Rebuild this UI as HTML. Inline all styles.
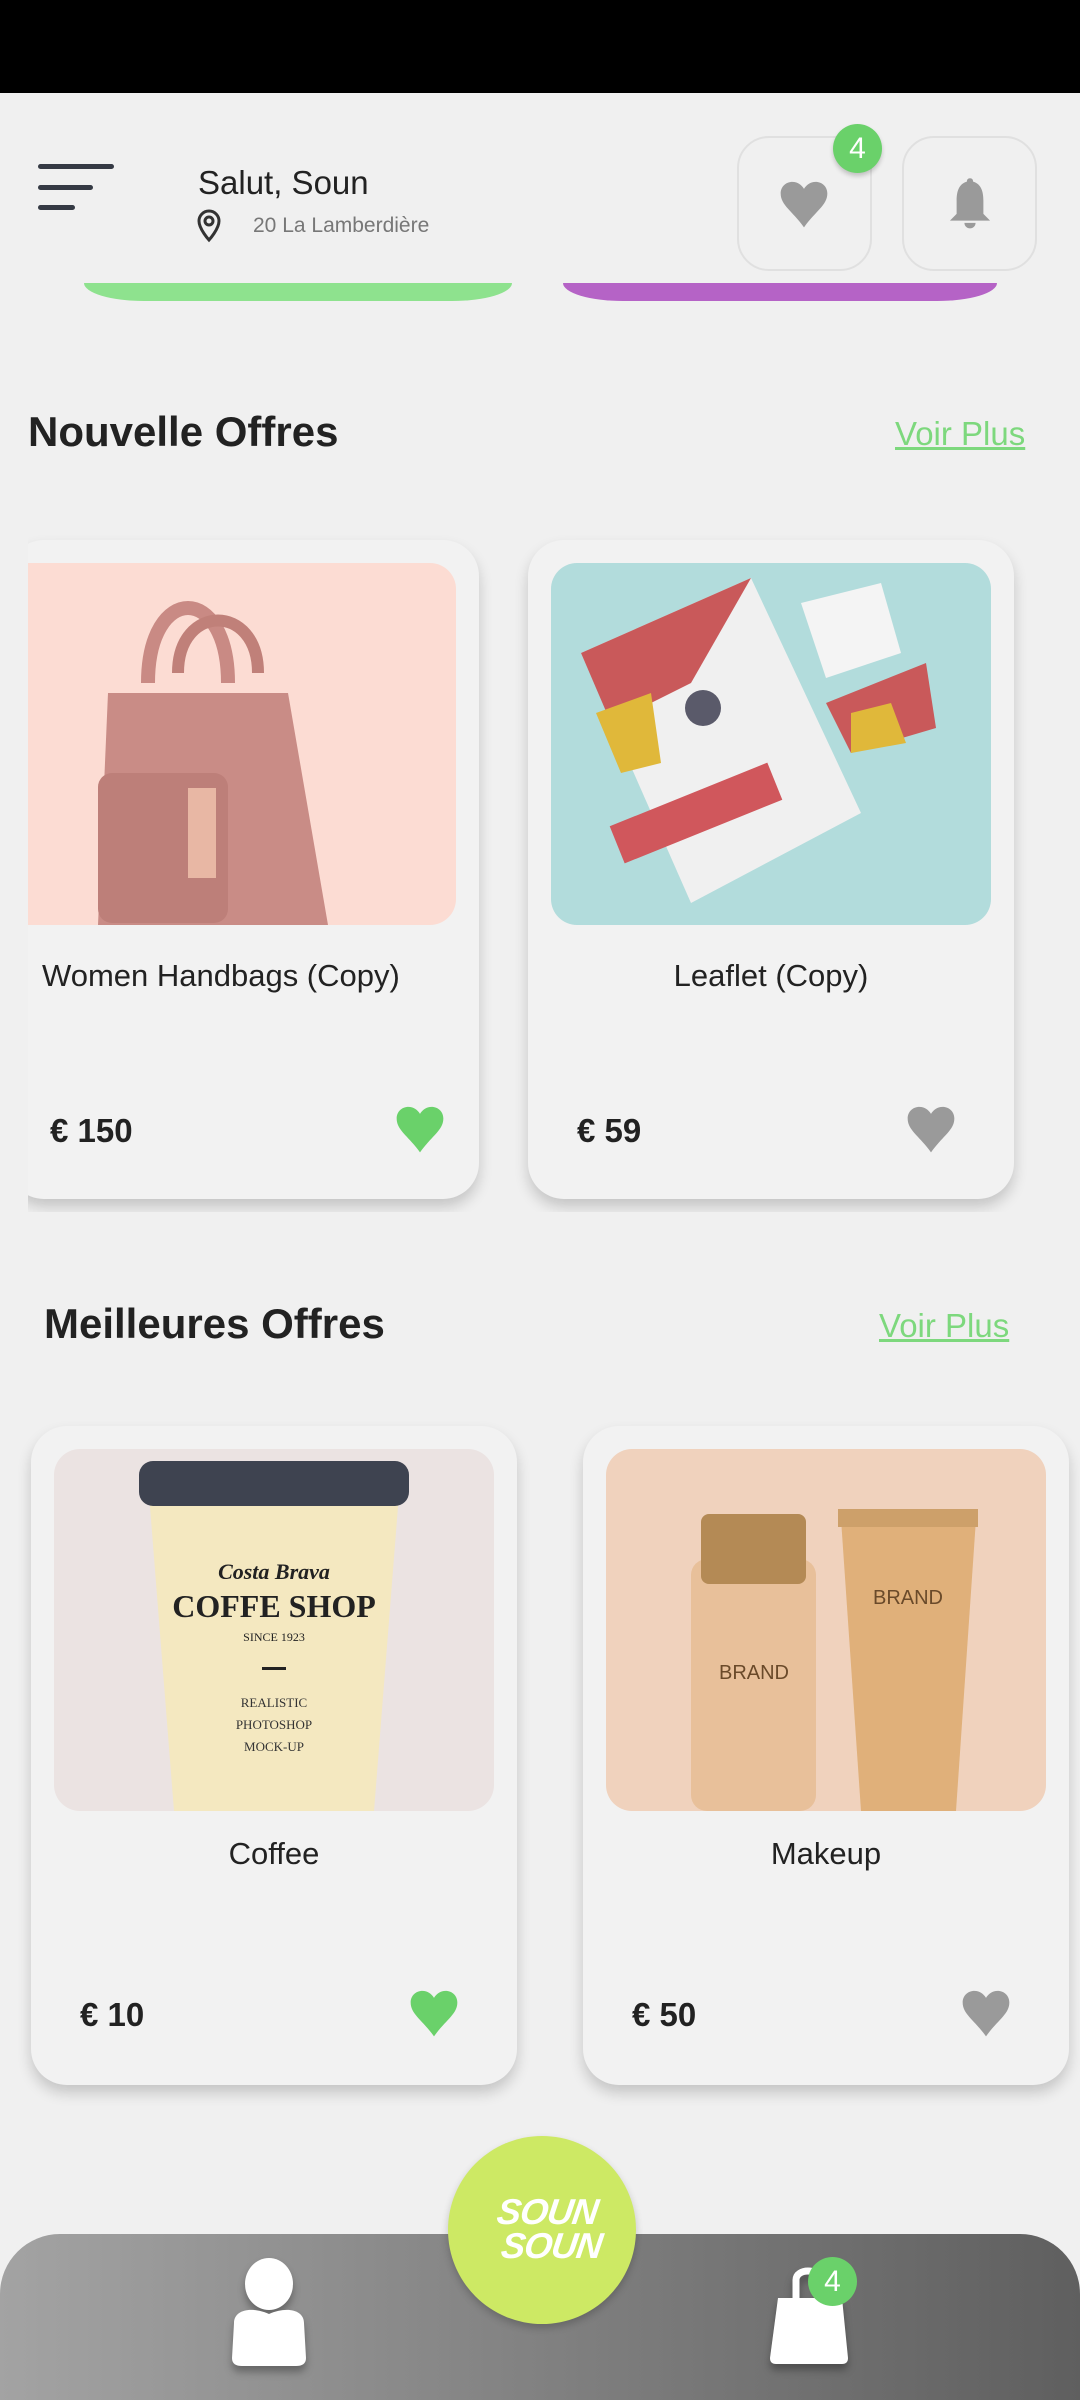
<!DOCTYPE html>
<html><head><meta charset="utf-8"><style>
*{margin:0;padding:0;box-sizing:border-box}
body{width:1080px;height:2400px;background:#f0f0f0;font-family:"Liberation Sans",sans-serif;position:relative;overflow:hidden;color:#222}
.abs{position:absolute}
.card{position:absolute;background:#f2f2f2;border-radius:36px;box-shadow:0 8px 14px rgba(0,0,0,.18)}
.img{position:absolute;border-radius:26px;overflow:hidden}
.title{position:absolute;font-size:31px;color:#222;text-align:center;width:100%}
.price{position:absolute;font-size:33px;font-weight:bold;color:#222}
.h1{position:absolute;font-size:42px;font-weight:bold;color:#222}
.more{position:absolute;font-size:33px;color:#7dd87d;text-decoration:underline}
</style></head><body>
<div class="abs" style="left:0;top:0;width:1080px;height:93px;background:#000"></div>

<!-- header -->
<div class="abs" style="left:38px;top:164px;width:76px;height:5px;background:#353a44;border-radius:3px"></div>
<div class="abs" style="left:38px;top:185px;width:55px;height:5px;background:#353a44;border-radius:3px"></div>
<div class="abs" style="left:38px;top:205px;width:37px;height:5px;background:#353a44;border-radius:3px"></div>
<div class="abs" style="left:198px;top:164px;font-size:33px;color:#222">Salut, Soun</div>
<svg class="abs" style="left:196px;top:209px" width="26" height="34" viewBox="0 0 26 34"><path d="M13 2C7 2 3 7 3 12c0 8 10 19 10 19s10-11 10-19C23 7 19 2 13 2z" fill="none" stroke="#333" stroke-width="3"/><circle cx="13" cy="12" r="4" fill="none" stroke="#333" stroke-width="3"/></svg>
<div class="abs" style="left:253px;top:214px;font-size:21px;color:#777">20 La Lamberdière</div>
<div class="abs" style="left:737px;top:136px;width:135px;height:135px;border:2px solid #e0e0e0;border-radius:32px"></div>
<svg class="abs" style="left:776px;top:176px" width="56" height="56" viewBox="0 0 24 24"><path d="M12 22C7 15 2 12.5 2 7.5 2 4.5 4.3 2.5 7 2.5c2.2 0 4 1.3 5 3 1-1.7 2.8-3 5-3 2.7 0 5 2 5 5 0 5-5 7.5-10 14.5z" fill="#9a9a9a"/></svg>
<div class="abs" style="left:833px;top:124px;width:49px;height:49px;border-radius:50%;background:#6ad16a;color:#fff;font-size:30px;text-align:center;line-height:49px;box-shadow:0 3px 5px rgba(0,0,0,.2)">4</div>
<div class="abs" style="left:902px;top:136px;width:135px;height:135px;border:2px solid #e0e0e0;border-radius:32px"></div>
<svg class="abs" style="left:943px;top:176px" width="54" height="58" viewBox="0 0 24 26"><path d="M12 1c1 0 1.4.7 1.4 1.5C17 3.5 18 7 18 11v6l3 3H3l3-3v-6c0-4 1-7.5 4.6-8.5C10.6 1.7 11 1 12 1z" fill="#9a9a9a"/><path d="M9.5 21h5a2.5 2.5 0 0 1-5 0z" fill="#9a9a9a"/></svg>
<div class="abs" style="left:84px;top:283px;width:428px;height:18px;background:#8ee28e;border-radius:0 0 60px 60px / 0 0 18px 18px"></div>
<div class="abs" style="left:563px;top:283px;width:434px;height:18px;background:#b563c6;border-radius:0 0 60px 60px / 0 0 18px 18px"></div>

<!-- Nouvelle -->
<div class="h1" style="left:28px;top:408px">Nouvelle Offres</div>
<div class="more" style="left:895px;top:415px">Voir Plus</div>
<div class="abs" style="left:28px;top:530px;width:1052px;height:682px;overflow:hidden">
 <div class="card" style="left:-20px;top:10px;width:471px;height:659px">
  <div class="img" style="left:20px;top:23px;width:428px;height:362px;background:#fcdcd3;border-radius:0 26px 26px 0">
   <svg width="428" height="362" viewBox="0 0 428 362"><path d="M120 120 C120 20 200 20 200 120" fill="none" stroke="#c98a84" stroke-width="14"/><path d="M150 110 C150 40 230 40 230 110" fill="none" stroke="#c08079" stroke-width="12"/><path d="M80 130 L260 130 L300 362 L70 362 Z" fill="#c98c86"/><rect x="70" y="210" width="130" height="150" rx="14" fill="#bd7f79"/><rect x="160" y="225" width="28" height="90" fill="#e8b7a4"/></svg>
  </div>
  <div class="title" style="left:0;top:418px;width:433px;margin-left:20px;text-align:left;padding-left:14px">Women Handbags (Copy)</div>
  <div class="price" style="left:42px;top:572px">€ 150</div>
  <svg class="abs" style="left:384px;top:560px" width="56" height="58" viewBox="0 0 24 24"><path d="M12 22C7 15 2 12.5 2 7.5 2 4.5 4.3 2.5 7 2.5c2.2 0 4 1.3 5 3 1-1.7 2.8-3 5-3 2.7 0 5 2 5 5 0 5-5 7.5-10 14.5z" fill="#6ad16a"/></svg>
 </div>
 <div class="card" style="left:500px;top:10px;width:486px;height:659px">
  <div class="img" style="left:23px;top:23px;width:440px;height:362px;background:#b2dcdc">
   <svg width="440" height="362" viewBox="0 0 440 362"><path d="M30 90 L200 15 L310 250 L140 340 Z" fill="#f0f0f0"/><path d="M30 90 L200 15 L140 120 L60 160 Z" fill="#c9595a"/><path d="M45 150 L100 130 L110 200 L70 210 Z" fill="#e0b83a"/><rect x="60" y="230" width="170" height="40" fill="#d0575c" transform="rotate(-22 145 250)"/><path d="M250 40 L330 20 L350 90 L275 115 Z" fill="#f4f4f4"/><path d="M275 140 L375 100 L385 165 L300 190 Z" fill="#c9595a"/><path d="M300 150 L340 140 L355 180 L300 190 Z" fill="#e0b83a"/><circle cx="152" cy="145" r="18" fill="#5a5a6a"/></svg>
  </div>
  <div class="title" style="left:0;top:418px">Leaflet (Copy)</div>
  <div class="price" style="left:49px;top:572px">€ 59</div>
  <svg class="abs" style="left:375px;top:560px" width="56" height="58" viewBox="0 0 24 24"><path d="M12 22C7 15 2 12.5 2 7.5 2 4.5 4.3 2.5 7 2.5c2.2 0 4 1.3 5 3 1-1.7 2.8-3 5-3 2.7 0 5 2 5 5 0 5-5 7.5-10 14.5z" fill="#9a9a9a"/></svg>
 </div>
</div>

<!-- Meilleures -->
<div class="h1" style="left:44px;top:1300px">Meilleures Offres</div>
<div class="more" style="left:879px;top:1307px">Voir Plus</div>
<div class="card" style="left:31px;top:1426px;width:486px;height:659px">
 <div class="img" style="left:23px;top:23px;width:440px;height:362px;background:#ebe3e2">
  <svg width="440" height="362" viewBox="0 0 440 362"><path d="M95 45 L345 45 L320 362 L120 362 Z" fill="#f4e8c0"/><rect x="85" y="12" width="270" height="45" rx="14" fill="#3e4350"/><text x="220" y="130" font-family="Liberation Serif" font-style="italic" font-weight="bold" font-size="22" text-anchor="middle" fill="#222">Costa Brava</text><text x="220" y="168" font-family="Liberation Serif" font-weight="bold" font-size="32" text-anchor="middle" fill="#222">COFFE SHOP</text><text x="220" y="192" font-family="Liberation Serif" font-size="12" text-anchor="middle" fill="#222">SINCE 1923</text><rect x="208" y="218" width="24" height="3" fill="#222"/><text x="220" y="258" font-family="Liberation Serif" font-size="13" text-anchor="middle" fill="#333">REALISTIC</text><text x="220" y="280" font-family="Liberation Serif" font-size="13" text-anchor="middle" fill="#333">PHOTOSHOP</text><text x="220" y="302" font-family="Liberation Serif" font-size="13" text-anchor="middle" fill="#333">MOCK-UP</text></svg>
 </div>
 <div class="title" style="left:0;top:410px">Coffee</div>
 <div class="price" style="left:49px;top:570px">€ 10</div>
 <svg class="abs" style="left:375px;top:558px" width="56" height="58" viewBox="0 0 24 24"><path d="M12 22C7 15 2 12.5 2 7.5 2 4.5 4.3 2.5 7 2.5c2.2 0 4 1.3 5 3 1-1.7 2.8-3 5-3 2.7 0 5 2 5 5 0 5-5 7.5-10 14.5z" fill="#6ad16a"/></svg>
</div>
<div class="card" style="left:583px;top:1426px;width:486px;height:659px">
 <div class="img" style="left:23px;top:23px;width:440px;height:362px;background:#f0d2bd">
  <svg width="440" height="362" viewBox="0 0 440 362"><rect x="85" y="110" width="125" height="252" rx="16" fill="#e8c09a"/><rect x="95" y="65" width="105" height="70" rx="8" fill="#b48a55"/><path d="M235 70 L370 70 L350 362 L255 362 Z" fill="#e0b07a"/><rect x="232" y="60" width="140" height="18" fill="#cda06a"/><text x="148" y="230" font-size="20" text-anchor="middle" fill="#6a4a2a">BRAND</text><text x="302" y="155" font-size="20" text-anchor="middle" fill="#6a4a2a">BRAND</text></svg>
 </div>
 <div class="title" style="left:0;top:410px">Makeup</div>
 <div class="price" style="left:49px;top:570px">€ 50</div>
 <svg class="abs" style="left:375px;top:558px" width="56" height="58" viewBox="0 0 24 24"><path d="M12 22C7 15 2 12.5 2 7.5 2 4.5 4.3 2.5 7 2.5c2.2 0 4 1.3 5 3 1-1.7 2.8-3 5-3 2.7 0 5 2 5 5 0 5-5 7.5-10 14.5z" fill="#9a9a9a"/></svg>
</div>

<!-- bottom bar -->
<div class="abs" style="left:0;top:2234px;width:1080px;height:166px;background:linear-gradient(90deg,#a3a3a3,#5f5f5f);border-radius:60px 60px 0 0"></div>
<svg class="abs" style="left:226px;top:2258px;filter:drop-shadow(0 6px 4px rgba(0,0,0,.3))" width="86" height="110" viewBox="0 0 86 110"><ellipse cx="43" cy="26" rx="24" ry="26" fill="#fff"/><path d="M8 65 C8 52 25 48 43 56 C61 48 78 52 78 65 L80 100 C80 106 76 108 70 108 L16 108 C10 108 6 106 6 100 Z" fill="#fff"/></svg>
<svg class="abs" style="left:768px;top:2262px;filter:drop-shadow(0 6px 4px rgba(0,0,0,.3))" width="86" height="104" viewBox="0 0 86 104"><path d="M28 36 V18 C28 6 52 6 52 18 V36" fill="none" stroke="#fff" stroke-width="7"/><path d="M10 36 L74 36 L80 96 C80 100 78 102 74 102 L8 102 C4 102 2 100 2 96 Z" fill="#fff"/></svg>
<div class="abs" style="left:808px;top:2257px;width:49px;height:49px;border-radius:50%;background:#6ad16a;color:#fff;font-size:30px;text-align:center;line-height:49px">4</div>
<div class="abs" style="left:448px;top:2136px;width:188px;height:188px;border-radius:50%;background:#cde964;box-shadow:0 4px 8px rgba(0,0,0,.2)"></div>
<div class="abs" style="left:470px;top:2195px;width:150px;font-size:36px;font-weight:900;font-style:italic;color:#fff;line-height:34px;text-align:center;letter-spacing:-1px;transform:skewX(-8deg)">SOUN<br>&nbsp;&nbsp;SOUN</div>
</body></html>
